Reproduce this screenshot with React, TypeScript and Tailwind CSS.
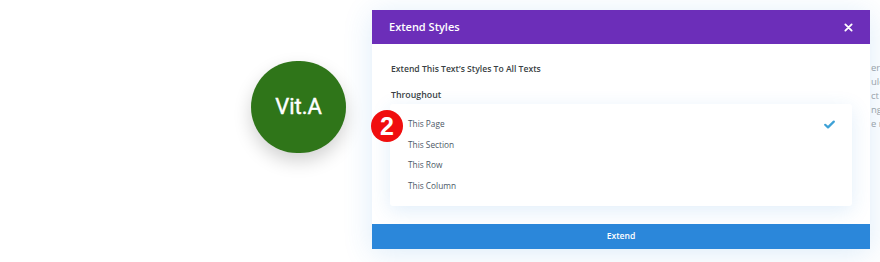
import React from "react";

export default function App() {
  const items = ["This Page", "This Section", "This Row", "This Column"];
  return (
    <div
      className="w-[880px] h-[262px] bg-white overflow-hidden relative"
      style={{ fontFamily: '"Open Sans", "Liberation Sans", sans-serif' }}
    >
      <div className="flex items-start">
        <div className="pl-[251px] pt-[61px] shrink-0">
          <div className="w-[95px] h-[92px] rounded-full bg-[#2f7519] flex items-center justify-center shadow-[0_8px_18px_rgba(0,0,0,0.18)]">
            <span className="text-white text-[22px] font-normal leading-none [-webkit-text-stroke:0.4px_white]" style={{ fontFamily: 'Roboto, "Open Sans", sans-serif' }}>
              Vit.A
            </span>
          </div>
        </div>
        <div className="ml-[26px] mt-[10px] w-[498px] shrink-0 bg-white shadow-[0_4px_28px_rgba(43,135,218,0.16)] relative z-10">
          <div className="h-[34px] bg-[#6c2eb9] flex items-center justify-between pl-[17px] pr-[17px]">
            <span className="text-white text-[11px] font-semibold">Extend Styles</span>
            <svg width="9" height="9" viewBox="0 0 10 10">
              <path d="M1.5 1.5 L8.5 8.5 M8.5 1.5 L1.5 8.5" stroke="white" strokeWidth="2" strokeLinecap="round" />
            </svg>
          </div>
          <div className="px-[18px] pt-[18px] pb-[18px]">
            <div className="pl-[1px] text-[8.6px] font-semibold text-[#3a3f44] leading-[14px]">
              Extend This Text’s Styles To All Texts
            </div>
            <div className="pl-[1px] mt-[12px] text-[8.8px] font-semibold text-[#3a3f44] leading-[14px]">Throughout</div>
            <div className="relative mt-[2px] bg-white rounded-[3px] shadow-[0_5px_20px_rgba(43,135,218,0.14)] py-[10px]">
              {items.map((t, i) => (
                <div key={t} className="h-[20.5px] flex items-center justify-between pl-[18px] pr-[17px]">
                  <span className="text-[8.3px] text-[#4c5866]">{t}</span>
                  {i === 0 && (
                    <svg width="11" height="9" viewBox="0 0 11 9">
                      <path d="M1.2 4.8 L4 7.4 L9.8 1.6" stroke="#3ea1d6" strokeWidth="2.2" fill="none" strokeLinecap="round" strokeLinejoin="round" />
                    </svg>
                  )}
                </div>
              ))}
              <div className="absolute left-[-19px] top-[6px] w-[32px] h-[32px] rounded-full bg-[#f00e0e] flex items-center justify-center">
                <span className="text-white text-[25px] font-bold leading-none" style={{ fontFamily: '"Liberation Sans", Arial, sans-serif' }}>2</span>
              </div>
            </div>
          </div>
          <div className="h-[25px] bg-[#2b87da] flex items-center justify-center">
            <span className="text-white text-[8.6px] font-semibold">Extend</span>
          </div>
        </div>
        <div className="ml-[1px] mt-[61px] flex flex-col text-[9.5px] leading-[14px] text-[#a0a4a8] whitespace-nowrap">
          <span>ere</span>
          <span>ule</span>
          <span>ct</span>
          <span>ngs</span>
          <span>e m</span>
        </div>
      </div>
    </div>
  );
}
